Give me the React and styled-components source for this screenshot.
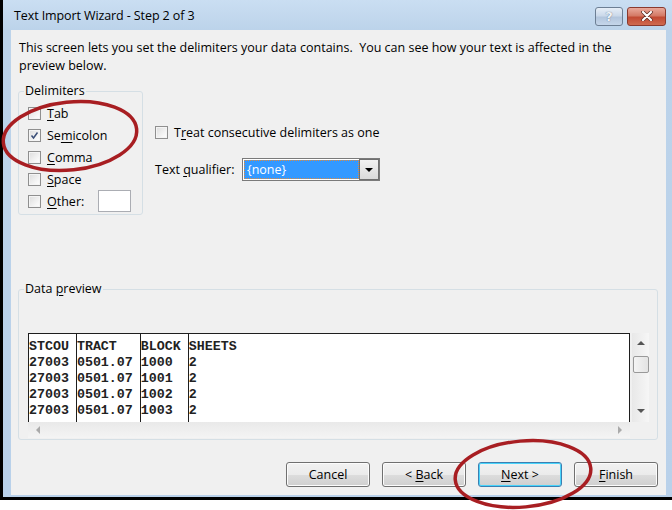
import React from "react";
import styled, { createGlobalStyle } from "styled-components";

const Global = createGlobalStyle`
  html, body { margin: 0; padding: 0; background: #ffffff; }
  body { font-family: "Open Sans", "Noto Sans", sans-serif; }
`;

const Page = styled.div`
  position: relative;
  width: 672px;
  height: 510px;
  overflow: hidden;
`;

const Window = styled.div`
  width: 669px;
  height: 497px;
  border-left: 3px solid #000;
  border-bottom: 3px solid #000;
  background: linear-gradient(#cadef2, #bcd3ea 30px, #b9d1ea);
  display: flex;
  flex-direction: column;
`;

const TitleBar = styled.div`
  height: 30px;
  display: flex;
  align-items: center;
  padding: 0 6px 0 11px;
`;

const Title = styled.div`
  flex: 1;
  font-size: 12.5px;
  color: #000;
  letter-spacing: -0.1px;
`;

const CapButton = styled.div`
  width: ${(p) => p.w}px;
  height: 19px;
  margin-left: ${(p) => p.gap || 0}px;
  margin-top: 2px;
  border: 1px solid ${(p) => (p.red ? "#8a3a2e" : "#6d7f94")};
  border-radius: 3px;
  background: ${(p) =>
    p.red
      ? "linear-gradient(#e9a99b, #d47a66 45%, #c24a33 55%, #cf6a4f)"
      : "linear-gradient(#e6eef7, #cbd9ea 45%, #b3c6dd 55%, #c5d6ea)"};
  display: flex;
  align-items: center;
  justify-content: center;
  font: bold 13px "DejaVu Sans", sans-serif;
  color: ${(p) => (p.red ? "#fff" : "#eef3f9")};
  text-shadow: 0 0 1px #40506a;
  box-sizing: border-box;
`;

const Content = styled.div`
  flex: 1;
  margin: 0 6px 2px 8px;
  background: #f0f0f0;
  padding: 9px 8px 0 7px;
  display: flex;
  flex-direction: column;
  font-size: 12.5px;
  color: #000;
`;

const Intro = styled.p`
  margin: 0 0 0 1px;
  line-height: 18px;
  width: 620px;
`;

const TopRow = styled.div`
  display: flex;
  margin-top: 8px;
  height: 137px;
`;

const Group = styled.fieldset`
  margin: 0;
  padding: 0 8px 0 9px;
  border: 1px solid #d5dfe5;
  border-radius: 3px;
  box-sizing: border-box;
  width: ${(p) => p.w};
  height: ${(p) => p.h}px;
  position: relative;
`;

const Legend = styled.legend`
  padding: 0 1px;
  margin-left: -4px;
  line-height: 16px;
`;

const CheckList = styled.div`
  display: flex;
  flex-direction: column;
  gap: 6px;
  margin-top: 6px;
`;

const CheckRow = styled.label`
  display: flex;
  align-items: center;
  height: 16px;
  gap: 6px;
`;

const Box = styled.span`
  width: 13px;
  height: 13px;
  box-sizing: border-box;
  border: 1px solid #8f8f8f;
  background: linear-gradient(135deg, #dcdcdc, #f6f6f6 70%, #ffffff);
  box-shadow: inset 0 0 0 1px #f4f4f4;
  display: flex;
  align-items: center;
  justify-content: center;
  flex: none;
`;

const OtherInput = styled.span`
  width: 33px;
  height: 22px;
  border: 1px solid #abadb3;
  background: #fff;
  margin-left: 8px;
  box-sizing: border-box;
`;

const U = styled.span`
  text-decoration: underline;
  text-underline-offset: 2px;
`;

const RightCol = styled.div`
  margin-left: 12px;
  padding-top: 41px;
  display: flex;
  flex-direction: column;
  gap: 18px;
`;

const QualRow = styled.div`
  display: flex;
  align-items: center;
`;

const QualLabel = styled.span`
  width: 87px;
`;

const Select = styled.div`
  width: 138px;
  height: 23px;
  border: 1px solid #7a7a7a;
  background: #fff;
  box-sizing: border-box;
  display: flex;
  padding: 1px;
`;

const SelValue = styled.div`
  flex: 1;
  background: #3399ff;
  color: #fff;
  border: 1px dotted #e08a3a;
  padding-left: 2px;
  line-height: 17px;
`;

const DropBtn = styled.div`
  width: 18px;
  border: 1px solid #707070;
  background: linear-gradient(#f2f2f2, #dadada);
  display: flex;
  align-items: center;
  justify-content: center;
  margin: -1px -1px -1px 0;
`;

const PreviewGroup = styled(Group)`
  margin-top: 61px;
  padding: 0 8px 0 9px;
`;

const PreviewArea = styled.div`
  margin-top: 36px;
  display: flex;
  flex-direction: column;
`;

const PreviewTop = styled.div`
  display: flex;
`;

const Grid = styled.div`
  width: 602px;
  height: 89px;
  box-sizing: border-box;
  border-top: 1px solid #1e1e1e;
  border-right: 1px solid #1e1e1e;
  background: #fff;
  display: flex;
  font-family: "Liberation Mono", monospace;
  font-size: 13.3px;
  font-weight: bold;
  color: #222;
  overflow: hidden;
  padding-top: 5px;
`;

const Col = styled.div`
  width: ${(p) => p.w}px;
  border-left: 1px solid #1e1e1e;
  margin-top: -5px;
  padding-top: 5px;
  box-sizing: border-box;
  line-height: 16px;
  white-space: pre;
`;

const VScroll = styled.div`
  width: 17px;
  height: 89px;
  margin-left: 2px;
  background: linear-gradient(90deg, #e8e8e8, #f6f6f6);
  display: flex;
  flex-direction: column;
  align-items: center;
  box-sizing: border-box;
  padding: 8px 0 9px;
`;

const Thumb = styled.div`
  width: 16px;
  height: 17px;
  margin-top: 11px;
  border: 1px solid #999;
  border-radius: 2px;
  box-sizing: border-box;
  background: linear-gradient(90deg, #f4f4f4, #e3e3e3);
`;

const Spacer = styled.div`
  flex: 1;
`;

const HScroll = styled.div`
  width: 602px;
  height: 16px;
  background: linear-gradient(#e9e9e9, #f4f4f4);
  display: flex;
  align-items: center;
  justify-content: space-between;
  padding: 0 8px;
  box-sizing: border-box;
`;

const Buttons = styled.div`
  display: flex;
  justify-content: flex-end;
  gap: 12px;
  margin-top: 22px;
`;

const Button = styled.div`
  width: 84px;
  height: 25px;
  box-sizing: border-box;
  border: 1px solid ${(p) => (p.def ? "#3c7fb1" : "#707070")};
  border-radius: 3px;
  background: linear-gradient(#f2f2f2, #ebebeb 50%, #dddddd 51%, #cfcfcf);
  box-shadow: inset 0 0 0 1px ${(p) => (p.def ? "#48d4fb" : "#fcfcfc")};
  display: flex;
  align-items: center;
  justify-content: center;
  white-space: pre;
`;

const Overlay = styled.svg`
  position: absolute;
  left: 0;
  top: 0;
  pointer-events: none;
`;

const Tri = ({ dir, size = 4, color = "#444" }) => {
  const s = size;
  const pts = {
    up: `0,${s} ${s},0 ${2 * s},${s}`,
    down: `0,0 ${s},${s} ${2 * s},0`,
    left: `${s},0 0,${s} ${s},${2 * s}`,
    right: `0,0 ${s},${s} 0,${2 * s}`,
  }[dir];
  const w = dir === "up" || dir === "down" ? 2 * s : s;
  const h = dir === "up" || dir === "down" ? s : 2 * s;
  return (
    <svg width={w} height={h}>
      <polygon points={pts} fill={color} />
    </svg>
  );
};

const Check = ({ checked, children }) => (
  <CheckRow>
    <Box>
      {checked && (
        <svg width="9" height="9" viewBox="0 0 9 9">
          <path d="M1.5 4.5 L3.5 7 L7.5 1.5" stroke="#3b4f78" strokeWidth="1.5" fill="none" />
        </svg>
      )}
    </Box>
    <span>{children}</span>
  </CheckRow>
);

const rows = [
  ["STCOU", "TRACT", "BLOCK", "SHEETS"],
  ["27003", "0501.07", "1000", "2"],
  ["27003", "0501.07", "1001", "2"],
  ["27003", "0501.07", "1002", "2"],
  ["27003", "0501.07", "1003", "2"],
];
const widths = [48, 64, 48, 442];

export default function App() {
  return (
    <Page>
      <Global />
      <Window>
        <TitleBar>
          <Title>Text Import Wizard - Step 2 of 3</Title>
          <CapButton w={28}>?</CapButton>
          <CapButton w={39} gap={4} red>
            <svg width="14" height="10" viewBox="0 0 14 10">
              <path d="M3 1 L11 9 M11 1 L3 9" stroke="#5a2a22" strokeWidth="3.6" strokeLinecap="round" />
              <path d="M3 1 L11 9 M11 1 L3 9" stroke="#fff" strokeWidth="2.2" strokeLinecap="round" />
            </svg>
          </CapButton>
        </TitleBar>
        <Content>
          <Intro>
            This screen lets you set the delimiters your data contains.&nbsp; You can see how your text is
            affected in the preview below.
          </Intro>
          <TopRow>
            <Group w="125px" h={132}>
              <Legend>Delimiters</Legend>
              <CheckList>
                <Check>
                  <U>T</U>ab
                </Check>
                <Check checked>
                  Se<U>m</U>icolon
                </Check>
                <Check>
                  <U>C</U>omma
                </Check>
                <Check>
                  <U>S</U>pace
                </Check>
                <CheckRow>
                  <Box />
                  <span>
                    <U>O</U>ther:
                  </span>
                  <OtherInput />
                </CheckRow>
              </CheckList>
            </Group>
            <RightCol>
              <Check>
                T<U>r</U>eat consecutive delimiters as one
              </Check>
              <QualRow>
                <QualLabel>
                  Text <U>q</U>ualifier:
                </QualLabel>
                <Select>
                  <SelValue>{"{none}"}</SelValue>
                  <DropBtn>
                    <Tri dir="down" size={4} color="#000" />
                  </DropBtn>
                </Select>
              </QualRow>
            </RightCol>
          </TopRow>
          <PreviewGroup w="640px" h={159}>
            <Legend>
              Data <U>p</U>review
            </Legend>
            <PreviewArea>
              <PreviewTop>
                <Grid>
                  {widths.map((w, c) => (
                    <Col key={c} w={w}>
                      {rows.map((r) => r[c]).join("\n")}
                    </Col>
                  ))}
                </Grid>
                <VScroll>
                  <Tri dir="up" size={4} color="#555" />
                  <Thumb />
                  <Spacer />
                  <Tri dir="down" size={4} color="#555" />
                </VScroll>
              </PreviewTop>
              <HScroll>
                <Tri dir="left" size={4} color="#aaa" />
                <Tri dir="right" size={4} color="#aaa" />
              </HScroll>
            </PreviewArea>
          </PreviewGroup>
          <Buttons>
            <Button>Cancel</Button>
            <Button>
              <span>
                &lt; <U>B</U>ack
              </span>
            </Button>
            <Button def>
              <span>
                <U>N</U>ext &gt;
              </span>
            </Button>
            <Button>
              <span>
                <U>F</U>inish
              </span>
            </Button>
          </Buttons>
        </Content>
      </Window>
      <Overlay width="672" height="510" viewBox="0 0 672 510">
        <ellipse cx="70" cy="136" rx="67" ry="34" transform="rotate(-6 70 136)" fill="none" stroke="#a81e22" strokeWidth="3.5" />
        <ellipse cx="523" cy="474" rx="68" ry="33" transform="rotate(-5 523 474)" fill="none" stroke="#a81e22" strokeWidth="3.5" />
      </Overlay>
    </Page>
  );
}
